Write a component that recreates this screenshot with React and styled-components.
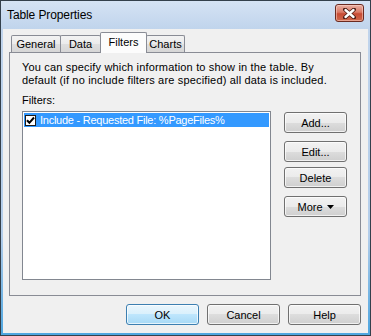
import React from 'react';
import styled, { createGlobalStyle } from 'styled-components';

const Global = createGlobalStyle`
  html, body { margin: 0; padding: 0; }
  body {
    width: 371px; height: 336px; overflow: hidden;
    font-family: "Liberation Sans", Arial, sans-serif;
    font-size: 11px; color: #000;
  }
`;

const Window = styled.div`
  box-sizing: border-box;
  width: 371px;
  height: 336px;
  border: 1px solid #34404c;
  background: linear-gradient(to bottom, #d5e3f4 0px, #c0d4ec 28px, #b3cdea 70%, #4ea6e0 100%);
  display: flex;
  flex-direction: column;
`;

const TitleBar = styled.div`
  height: 28px;
  display: flex;
  justify-content: space-between;
  padding: 0 6px 0 6px;
  flex-shrink: 0;
`;

const Title = styled.div`
  font-size: 12px;
  line-height: 28px;
  letter-spacing: -0.1px;
  color: #000;
`;

const CloseButton = styled.div`
  box-sizing: border-box;
  margin-top: 3px;
  width: 29px;
  height: 18px;
  border: 1px solid #6b2a20;
  border-radius: 3px;
  background: linear-gradient(to bottom, #eab0a3 0%, #da7a66 45%, #c74a33 55%, #cf6a4e 100%);
  box-shadow: inset 0 0 0 1px rgba(255, 220, 210, 0.5);
  display: flex;
  align-items: center;
  justify-content: center;
`;

const Content = styled.div`
  flex: 1;
  margin: 0 2px 2px 2px;
  background: #f0f0f0;
  padding: 3px 7px 8px 6px;
  display: flex;
  flex-direction: column;
`;

const TabStrip = styled.div`
  height: 20px;
  display: flex;
  align-items: flex-end;
  padding-left: 2px;
  position: relative;
  z-index: 1;
`;

const Tab = styled.div`
  box-sizing: border-box;
  width: ${p => p.$w}px;
  height: ${p => (p.$active ? 21 : 17)}px;
  margin-left: ${p => (p.$first ? 0 : -1)}px;
  margin-bottom: ${p => (p.$active ? -1 : 0)}px;
  border: 1px solid #898c95;
  border-bottom: none;
  border-radius: 2px 2px 0 0;
  background: ${p =>
    p.$active
      ? '#fcfcfc'
      : 'linear-gradient(to bottom, #f3f3f3 0%, #ebebeb 50%, #dfdfdf 50%, #d6d6d6 100%)'};
  position: relative;
  z-index: ${p => (p.$active ? 2 : 1)};
  display: flex;
  align-items: center;
  justify-content: center;
  padding-bottom: ${p => (p.$active ? 3 : 0)}px;
  font-size: 11px;
`;

const Panel = styled.div`
  box-sizing: border-box;
  height: 244px;
  border: 1px solid #898c95;
  background: #f0f0f0;
  padding: 8px 0 0 12px;
  display: flex;
  flex-direction: column;
`;

const Description = styled.p`
  margin: 0;
  line-height: 13px;
  letter-spacing: 0.17px;
  white-space: nowrap;
`;

const Label = styled.div`
  margin-top: 7px;
  line-height: 13px;
`;

const Body = styled.div`
  display: flex;
  margin-top: 4px;
`;

const List = styled.div`
  box-sizing: border-box;
  width: 249px;
  height: 169px;
  border: 1px solid #828790;
  background: #fff;
  padding: 1px;
`;

const Row = styled.div`
  height: 14px;
  display: flex;
  align-items: center;
  padding-left: 1px;
  background: ${p => (p.$selected ? '#3399ff' : 'transparent')};
  color: ${p => (p.$selected ? '#fff' : '#000')};
  letter-spacing: -0.25px;
  white-space: nowrap;
`;

const Check = styled.div`
  box-sizing: border-box;
  width: 11px;
  height: 11px;
  border: 1px solid #1c1c1c;
  background: #fff;
  margin-right: 4px;
  display: flex;
  align-items: center;
  justify-content: center;
  flex-shrink: 0;
`;

const SideButtons = styled.div`
  display: flex;
  flex-direction: column;
  margin-left: 13px;
  margin-top: 1px;
`;

const Button = styled.button`
  box-sizing: border-box;
  width: ${p => p.$w}px;
  height: 21px;
  margin: ${p => (p.$mt ? `${p.$mt}px 0 0 0` : 0)};
  padding: 0;
  border: 1px solid ${p => (p.$default ? '#3c7fb1' : '#707070')};
  border-radius: 3px;
  background: ${p =>
    p.$default
      ? 'linear-gradient(to bottom, #eaf6fd 0%, #d9f0fc 50%, #bee6fd 50%, #a7d9f5 100%)'
      : 'linear-gradient(to bottom, #f2f2f2 0%, #ebebeb 50%, #dddddd 50%, #cfcfcf 100%)'};
  box-shadow: inset 0 0 0 1px rgba(255, 255, 255, 0.7);
  font-family: "Liberation Sans", Arial, sans-serif;
  font-size: 11px;
  color: #000;
  display: flex;
  align-items: center;
  justify-content: center;
  gap: 4px;
`;

const Footer = styled.div`
  display: flex;
  justify-content: flex-end;
  gap: 8px;
  margin-top: 8px;
`;

export default function App() {
  return (
    <>
      <Global />
      <Window>
        <TitleBar>
          <Title>Table Properties</Title>
          <CloseButton>
            <svg width="13" height="11" viewBox="0 0 13 11">
              <path
                d="M2 1.5 L11 9.5 M11 1.5 L2 9.5"
                stroke="#4a1a12"
                strokeWidth="4"
                strokeLinecap="round"
                fill="none"
              />
              <path
                d="M2.5 2 L10.5 9 M10.5 2 L2.5 9"
                stroke="#fff"
                strokeWidth="2.4"
                strokeLinecap="round"
                fill="none"
              />
            </svg>
          </CloseButton>
        </TitleBar>
        <Content>
          <TabStrip>
            <Tab $first $w={50}>General</Tab>
            <Tab $w={41}>Data</Tab>
            <Tab $active $w={47}>Filters</Tab>
            <Tab $w={39}>Charts</Tab>
          </TabStrip>
          <Panel>
            <Description>
              You can specify which information to show in the table. By
              <br />
              default (if no include filters are specified) all data is included.
            </Description>
            <Label>Filters:</Label>
            <Body>
              <List>
                <Row $selected>
                  <Check>
                    <svg width="9" height="9" viewBox="0 0 9 9">
                      <path d="M1 4.2 L3.4 6.8 L8 1.5" stroke="#000" strokeWidth="2" fill="none" />
                    </svg>
                  </Check>
                  Include - Requested File: %PageFiles%
                </Row>
              </List>
              <SideButtons>
                <Button $w={63}>Add...</Button>
                <Button $w={63} $mt={8}>Edit...</Button>
                <Button $w={63} $mt={5}>Delete</Button>
                <Button $w={63} $mt={8}>
                  More
                  <svg width="7" height="4" viewBox="0 0 7 4">
                    <path d="M0 0 H7 L3.5 4 Z" fill="#000" />
                  </svg>
                </Button>
              </SideButtons>
            </Body>
          </Panel>
          <Footer>
            <Button $w={73} $default>OK</Button>
            <Button $w={73}>Cancel</Button>
            <Button $w={73}>Help</Button>
          </Footer>
        </Content>
      </Window>
    </>
  );
}
